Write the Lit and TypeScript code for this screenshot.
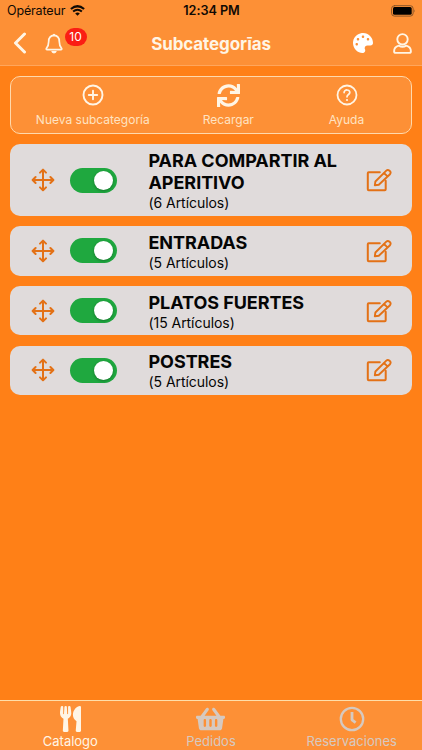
import { LitElement, html, css, svg } from "lit";
import { customElement, property } from "lit/decorators.js";
import { classMap } from "lit/directives/class-map.js";

const icon = (w: number, h: number, box: string, body: unknown) =>
  html`<svg width=${w} height=${h} viewBox=${box} fill="none" stroke-linecap="round" stroke-linejoin="round">${body}</svg>`;

const icons = {
  wifi: icon(15, 11, "0 0 15 11", svg`
    <path d="M.9 4Q7.5-1.5 14.1 4" stroke="currentColor" stroke-width="2.2" stroke-linecap="butt"/>
    <path d="M3.1 6.6Q7.5 2.9 11.9 6.6" stroke="currentColor" stroke-width="2" stroke-linecap="butt"/>
    <path d="M7.5 10.8L5.2 8.4Q7.5 6.6 9.8 8.4Z" fill="currentColor"/>`),
  battery: icon(25, 12, "0 0 25 12", svg`
    <rect x=".6" y=".7" width="21.5" height="10.4" rx="2.8" stroke="#8a5527" stroke-width="1"/>
    <rect x="2" y="2" width="18.7" height="7.8" rx="1.5" fill="#000"/>
    <path d="M23.3 4.2Q24.7 5.9 23.3 7.6Z" fill="#8a5527"/>`),
  back: icon(14, 22, "0 0 14 22", svg`<path d="M11.5 2L2.5 11L11.5 20" stroke="currentColor" stroke-width="3"/>`),
  bell: icon(18, 21, "0 0 18 21", svg`
    <path d="M9 2.4C5.2 2.7 3.7 5.4 3.7 8.4C3.7 12.5 2.9 13.5 1.5 15.2C1 16 1.2 16.6 2.1 16.6H15.9C16.8 16.6 17 16 16.5 15.2C15.1 13.5 14.3 12.5 14.3 8.4C14.3 5.4 12.8 2.7 9 2.4Z" stroke="currentColor" stroke-width="1.7"/>
    <path d="M7.5 2.4Q7.6.8 9 .8T10.5 2.4ZM6.2 18.1H11.8Q11.4 20.5 9 20.5T6.2 18.1Z" fill="currentColor"/>`),
  palette: icon(20, 20, "0 0 512 512", svg`<path fill="currentColor" d="M204.3 5C104.9 24.4 24.8 104.3 5.2 203.4c-37 187 131.7 326.4 258.8 306.7 41.2-6.4 61.4-54.6 42.5-91.7-23.1-45.4 9.9-98.4 60.9-98.4h79.7c35.8 0 64.8-29.6 64.9-65.3C511.5 97.1 368.1-26.9 204.3 5zM96 320c-17.7 0-32-14.3-32-32s14.3-32 32-32 32 14.3 32 32-14.3 32-32 32zm32-128c-17.7 0-32-14.3-32-32s14.3-32 32-32 32 14.3 32 32-14.3 32-32 32zm128-64c-17.7 0-32-14.3-32-32s14.3-32 32-32 32 14.3 32 32-14.3 32-32 32zm128 64c-17.7 0-32-14.3-32-32s14.3-32 32-32 32 14.3 32 32-14.3 32-32 32z"/>`),
  person: icon(19, 21, "0 0 19 21", svg`
    <circle cx="9.5" cy="6.3" r="5.2" stroke="currentColor" stroke-width="1.9"/>
    <path d="M5.8 12.7C2.7 13.5 1.1 15.5 1.1 18.2Q1.1 19.9 2.7 19.9H16.3Q17.9 19.9 17.9 18.2C17.9 15.5 16.3 13.5 13.2 12.7Q9.5 14.8 5.8 12.7Z" stroke="currentColor" stroke-width="1.9"/>`),
  plus: icon(22, 22, "0 0 22 22", svg`
    <circle cx="11" cy="11" r="9.5" stroke="currentColor" stroke-width="1.9"/>
    <path d="M11 6.8V15.2M6.8 11H15.2" stroke="currentColor" stroke-width="1.9"/>`),
  sync: icon(23, 23, "0 0 512 512", svg`<path fill="currentColor" d="M440.65 12.57l4 82.77A247.16 247.16 0 0 0 255.83 8C134.73 8 33.91 94.92 12.29 209.82A12 12 0 0 0 24.09 224h49.05a12 12 0 0 0 11.67-9.26 175.91 175.91 0 0 1 317-56.94l-101.46-4.86a12 12 0 0 0-12.57 12v47.41a12 12 0 0 0 12 12H500a12 12 0 0 0 12-12V12a12 12 0 0 0-12-12h-47.37a12 12 0 0 0-11.98 12.57zM255.83 432a175.61 175.61 0 0 1-146-77.8l101.8 4.87a12 12 0 0 0 12.57-12v-47.4a12 12 0 0 0-12-12H12a12 12 0 0 0-12 12V500a12 12 0 0 0 12 12h47.35a12 12 0 0 0 12-12.6l-4.15-82.57A247.17 247.17 0 0 0 255.83 504c121.11 0 221.93-86.92 243.55-201.82a12 12 0 0 0-11.8-14.18h-49.05a12 12 0 0 0-11.67 9.26A175.86 175.86 0 0 1 255.83 432z"/>`),
  help: icon(22, 22, "0 0 22 22", svg`
    <circle cx="11" cy="11" r="9.5" stroke="currentColor" stroke-width="1.8"/>
    <path d="M8.1 8.6C8.1 5 14 5.2 13.8 8.6C13.7 10.5 11 10.5 11 12.8" stroke="currentColor" stroke-width="1.7"/>
    <circle cx="11" cy="16" r="1.1" fill="currentColor"/>`),
  move: icon(24, 24, "0 0 24 24", svg`<path d="M12 1.8V22.2M1.8 12H22.2M9 4.6L12 1.6L15 4.6M9 19.4L12 22.4L15 19.4M4.6 9L1.6 12L4.6 15M19.4 9L22.4 12L19.4 15" stroke="currentColor" stroke-width="2"/>`),
  edit: icon(26, 24, "0 0 26 24", svg`
    <path d="M13.8 4.3H2.7Q1.8 4.3 1.8 5.2V21.3Q1.8 22.2 2.7 22.2H18.8Q19.7 22.2 19.7 21.3V12.8" stroke="currentColor" stroke-width="2"/>
    <path d="M8.8 17.3L9.4 13.5L20.3 2.6Q21.8 1.3 23.6 2.8T24 6.2L12.8 16.7ZM17.9 5L21.6 8.4" stroke="currentColor" stroke-width="1.9"/>`),
  utensils: icon(21, 26, "0 0 416 512", svg`<path fill="currentColor" d="M207.9 15.2c.8 4.7 16.1 94.5 16.1 128.8 0 52.3-27.8 89.6-68.9 104.6L168 486.7c.7 13.7-10.2 25.3-24 25.3H80c-13.7 0-24.7-11.5-24-25.3l12.9-238.1C27.7 233.6 0 196.2 0 144 0 109.6 15.3 19.9 16.1 15.2 19.3-5.1 61.4-5.4 64 16.3v141.2c1.3 3.4 15.1 3.2 16 0 1.4-25.3 7.9-139.2 8-141.8 3.3-20.8 44.7-20.8 47.9 0 .2 2.7 6.6 116.5 8 141.8.9 3.2 14.8 3.4 16 0V16.3c2.6-21.6 44.8-21.4 48-1.1zm119.2 285.7l-15 185.1c-1.2 14 9.9 26 23.9 26h56c13.3 0 24-10.7 24-24V24c0-13.2-10.7-24-24-24-82.5 0-221.4 178.5-64.9 300.9z"/>`),
  basket: icon(29, 26, "0 0 576 512", svg`<path fill="currentColor" d="M576 216v16c0 13.255-10.745 24-24 24h-8l-26.113 182.788C514.509 462.435 494.257 480 470.37 480H105.63c-23.887 0-44.139-17.565-47.518-41.212L32 256h-8c-13.255 0-24-10.745-24-24v-16c0-13.255 10.745-24 24-24h67.341l106.78-146.821c10.395-14.292 30.407-17.453 44.701-7.058 14.293 10.395 17.453 30.408 7.058 44.701L170.477 192h235.046L326.12 82.821c-10.395-14.292-7.234-34.306 7.059-44.701 14.291-10.395 34.306-7.235 44.701 7.058L484.659 192H552c13.255 0 24 10.745 24 24zM312 392V280c0-13.255-10.745-24-24-24s-24 10.745-24 24v112c0 13.255 10.745 24 24 24s24-10.745 24-24zm112 0V280c0-13.255-10.745-24-24-24s-24 10.745-24 24v112c0 13.255 10.745 24 24 24s24-10.745 24-24zm-224 0V280c0-13.255-10.745-24-24-24s-24 10.745-24 24v112c0 13.255 10.745 24 24 24s24-10.745 24-24z"/>`),
  clock: icon(26, 26, "0 0 26 26", svg`
    <circle cx="13" cy="13" r="11.2" stroke="currentColor" stroke-width="2.3"/>
    <path d="M13 6V13.8L16.6 16.6" stroke="currentColor" stroke-width="2.8" stroke-linecap="butt"/>`),
};

@customElement("category-card")
class CategoryCard extends LitElement {
  @property() name = "";
  @property({ type: Number }) count = 0;

  static styles = css`
    :host { display: flex; align-items: center; box-sizing: border-box; min-height: 49.5px; padding: 4.75px 19.6px 4.75px 20.3px;
      border-radius: 10px; background: #e0dbdb; color: #e37116; }
    svg { display: block; }
    .switch { width: 47px; height: 25px; margin-left: 15.4px; border-radius: 13px; background: #1fa83f; box-sizing: border-box;
      padding: 3px 4px; display: flex; justify-content: flex-end; }
    .knob { width: 19px; height: 19px; border-radius: 50%; background: #fff; box-shadow: 0 1px 3px rgba(0, 0, 0, .3); }
    .text { width: 206px; margin-left: 31.5px; color: #050505; }
    .name { padding-top: 1px; font-size: 18px; line-height: 22px; font-weight: 700; letter-spacing: -.05px; }
    .count { font-size: 14px; line-height: 17px; letter-spacing: -.05px; }
    .edit { margin-left: auto; }
  `;

  render() {
    return html`${icons.move}
      <div class="switch"><div class="knob"></div></div>
      <div class="text">
        <div class="name">${this.name}</div>
        <div class="count">(${this.count} Artículos)</div>
      </div>
      <div class="edit">${icons.edit}</div>`;
  }
}

@customElement("app-root")
class AppRoot extends LitElement {
  static styles = css`
    :host { display: flex; flex-direction: column; height: 750px; overflow: hidden; background: #ff8017;
      font-family: Inter, "Liberation Sans", sans-serif; color: #fff5e5; }
    svg { display: block; }
    .top { height: 66px; box-sizing: border-box; background: #fd9036; border-bottom: 1px solid #ffa65c; }
    .status { height: 21px; display: grid; grid-template-columns: 1fr auto 1fr; align-items: center; padding: 0 6px 0 7px;
      color: #100a04; font-size: 12.5px; }
    .carrier { display: flex; align-items: center; gap: 5px; letter-spacing: -.15px; }
    .time { font-weight: 600; font-size: 12.7px; letter-spacing: -.05px; }
    .battery { justify-self: end; }
    .nav { height: 44px; display: grid; grid-template-columns: 1fr auto 1fr; align-items: center; padding: 0 10px; }
    .left { display: flex; align-items: center; margin-left: 3px; }
    .alerts { position: relative; margin-left: 18px; }
    .badge { position: absolute; left: 19.5px; top: -5px; width: 22px; height: 18px; border-radius: 9px; background: #fa1e14;
      color: #fff; font-size: 12px; line-height: 18px; text-align: center; }
    .title { padding-top: 1px; font-size: 17px; font-weight: 700; letter-spacing: -.1px; }
    .right { display: flex; align-items: center; justify-content: flex-end; gap: 20px; }
    .white { color: #fff; }
    .main { flex: 1; display: flex; flex-direction: column; gap: 10.2px; padding: 9.8px 10.3px; }
    .tools { box-sizing: border-box; height: 58.5px; display: grid; grid-template-columns: 163px 108px 1fr; border: 1.5px solid #ffd9ac;
      border-radius: 10px; background: #fd9036; }
    .tool { display: flex; flex-direction: column; align-items: center; padding-top: 7px; gap: 4.5px; font-size: 12px;
      line-height: 17px; color: #ffe3c2; }
    .glyph { height: 23px; display: flex; align-items: center; color: #fff5e5; }
    .tabs { height: 50px; box-sizing: border-box; display: grid; grid-template-columns: repeat(3, 1fr); background: #fd9036;
      border-top: 1px solid #ffdfaa; }
    .tab { display: flex; flex-direction: column; align-items: center; padding-top: 5px; font-size: 13px; line-height: 17px;
      color: #d6c9c0; }
    .tab svg { margin-bottom: 1px; }
    .on { color: #fff5e5; }
  `;

  private items = [
    { name: "PARA COMPARTIR AL APERITIVO", count: 6 },
    { name: "ENTRADAS", count: 5 },
    { name: "PLATOS FUERTES", count: 15 },
    { name: "POSTRES", count: 5 },
  ];

  private tools = [
    { label: "Nueva subcategoría", glyph: icons.plus },
    { label: "Recargar", glyph: icons.sync },
    { label: "Ayuda", glyph: icons.help },
  ];

  private tabs = [
    { label: "Catalogo", glyph: icons.utensils, on: true },
    { label: "Pedidos", glyph: icons.basket, on: false },
    { label: "Reservaciones", glyph: icons.clock, on: false },
  ];

  render() {
    return html`
      <header class="top">
        <div class="status">
          <div class="carrier"><span>Opérateur</span>${icons.wifi}</div>
          <div class="time">12:34 PM</div>
          <div class="battery">${icons.battery}</div>
        </div>
        <div class="nav">
          <div class="left">${icons.back}<div class="alerts">${icons.bell}<span class="badge">10</span></div></div>
          <div class="title">Subcategorīas</div>
          <div class="right"><span class="white">${icons.palette}</span>${icons.person}</div>
        </div>
      </header>
      <main class="main">
        <div class="tools">
          ${this.tools.map((t) => html`<div class="tool"><div class="glyph">${t.glyph}</div><span>${t.label}</span></div>`)}
        </div>
        ${this.items.map((i) => html`<category-card .name=${i.name} .count=${i.count}></category-card>`)}
      </main>
      <nav class="tabs">
        ${this.tabs.map((t) => html`<div class=${classMap({ tab: true, on: t.on })}>${t.glyph}<span>${t.label}</span></div>`)}
      </nav>`;
  }
}
